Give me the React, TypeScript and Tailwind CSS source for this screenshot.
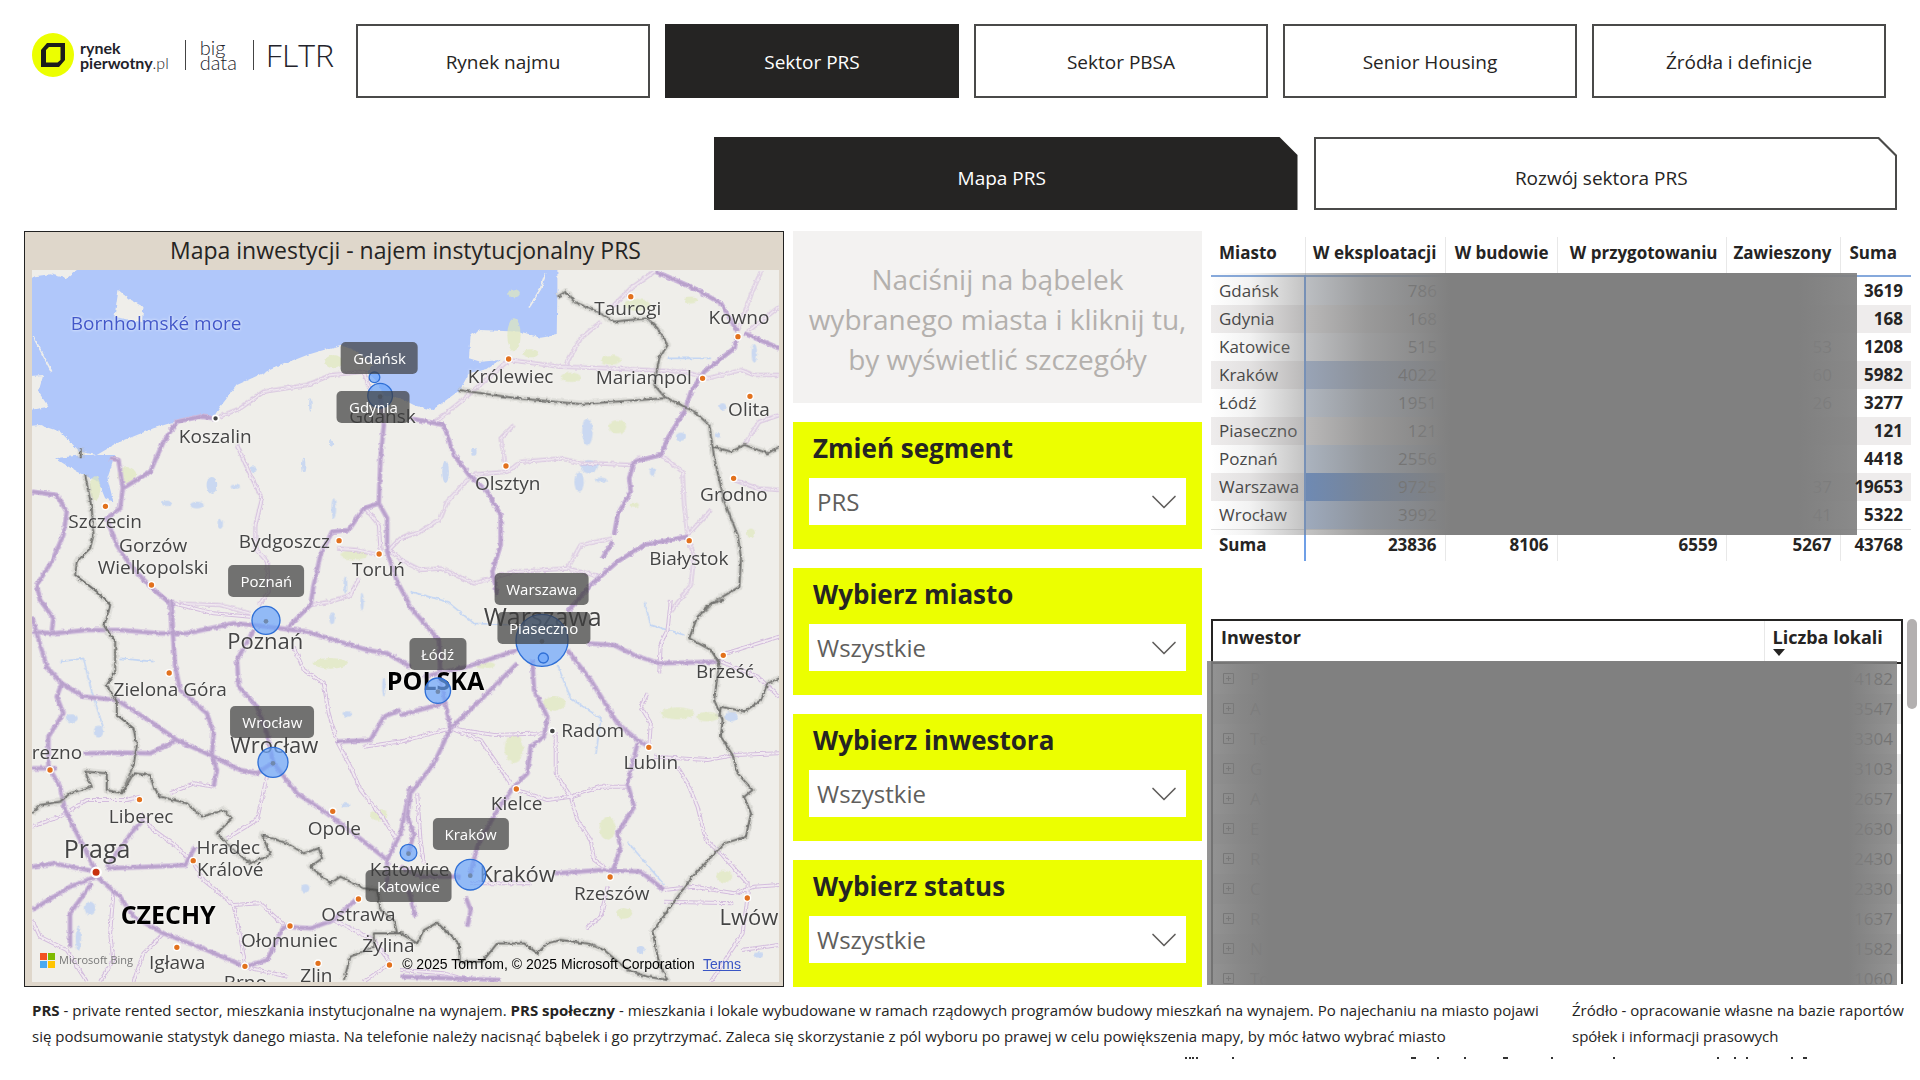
import React from 'react';
import { ChevronDown } from 'lucide-react';

const NAV = ['Rynek najmu', 'Sektor PRS', 'Sektor PBSA', 'Senior Housing', 'Źródła i definicje'];

const FILTERS = [
  { id: 'segment', label: 'Zmień segment', value: 'PRS' },
  { id: 'miasto', label: 'Wybierz miasto', value: 'Wszystkie' },
  { id: 'inwestor', label: 'Wybierz inwestora', value: 'Wszystkie' },
  { id: 'status', label: 'Wybierz status', value: 'Wszystkie' },
];

const CITIES = [
  { name: 'Gdańsk', active: '786', paused: '', sum: '3619', bar: 8 },
  { name: 'Gdynia', active: '168', paused: '', sum: '168', bar: 0 },
  { name: 'Katowice', active: '515', paused: '53', sum: '1208', bar: 4 },
  { name: 'Kraków', active: '4022', paused: '60', sum: '5982', bar: 40 },
  { name: 'Łódź', active: '1951', paused: '26', sum: '3277', bar: 20 },
  { name: 'Piaseczno', active: '121', paused: '', sum: '121', bar: 0 },
  { name: 'Poznań', active: '2556', paused: '', sum: '4418', bar: 26 },
  { name: 'Warszawa', active: '9725', paused: '37', sum: '19653', bar: 90 },
  { name: 'Wrocław', active: '3992', paused: '41', sum: '5322', bar: 40 },
];

const INVESTORS = [
  ['P', '4182'], ['A', '3547'], ['Te', '3304'], ['G', '3103'], ['A', '2657'], ['E', '2630'],
  ['R', '2430'], ['C', '2330'], ['R', '1637'], ['N', '1582'], ['To', '1060'],
];

// Map is laid out on a 746 x 712 plane, positions are turned into percentages
const MAP_W = 746;
const MAP_H = 712;

const TOWNS: { name: string; x: number; y: number; kind?: string }[] = [
  { name: 'Bornholmské more', x: 124, y: 53, kind: 'sea' },
  { name: 'Koszalin', x: 183, y: 166 },
  { name: 'Gdańsk', x: 350, y: 146 },
  { name: 'Szczecin', x: 73, y: 251 },
  { name: 'Gorzów', x: 121, y: 275 },
  { name: 'Wielkopolski', x: 121, y: 297 },
  { name: 'Bydgoszcz', x: 252, y: 271 },
  { name: 'Toruń', x: 346, y: 299 },
  { name: 'Taurogi', x: 595, y: 38 },
  { name: 'Kowno', x: 706, y: 47 },
  { name: 'Królewiec', x: 478, y: 106 },
  { name: 'Mariampol', x: 611, y: 107 },
  { name: 'Olita', x: 716, y: 139 },
  { name: 'Olsztyn', x: 475, y: 213 },
  { name: 'Grodno', x: 701, y: 224 },
  { name: 'Białystok', x: 656, y: 288 },
  { name: 'Poznań', x: 233, y: 370, kind: 'big' },
  { name: 'Zielona Góra', x: 138, y: 419 },
  { name: 'Wrocław', x: 242, y: 474, kind: 'large' },
  { name: 'Drezno', x: 18, y: 482 },
  { name: 'Liberec', x: 109, y: 546 },
  { name: 'Praga', x: 65, y: 578, kind: 'capital' },
  { name: 'Hradec', x: 196, y: 577 },
  { name: 'Králové', x: 198, y: 599 },
  { name: 'Opole', x: 302, y: 558 },
  { name: 'CZECHY', x: 136, y: 644, kind: 'country' },
  { name: 'Ostrawa', x: 326, y: 644 },
  { name: 'Ołomuniec', x: 257, y: 670 },
  { name: 'Igława', x: 145, y: 692 },
  { name: 'Brno', x: 213, y: 712 },
  { name: 'Zlin', x: 284, y: 705 },
  { name: 'Żylina', x: 356, y: 675 },
  { name: 'Warszawa', x: 510, y: 346, kind: 'capital' },
  { name: 'POLSKA', x: 403, y: 410, kind: 'country' },
  { name: 'Brześć', x: 692, y: 401 },
  { name: 'Radom', x: 560, y: 460 },
  { name: 'Lublin', x: 618, y: 492 },
  { name: 'Kielce', x: 484, y: 533 },
  { name: 'Kraków', x: 485, y: 603, kind: 'large' },
  { name: 'Katowice', x: 377, y: 599 },
  { name: 'Rzeszów', x: 579, y: 623 },
  { name: 'Lwów', x: 716, y: 646, kind: 'big' },
];

const TOWN_CLASS: Record<string, string> = {
  town: 'text-[19px] text-[#444]',
  sea: 'text-[19px] text-[#4257c9]',
  big: 'text-[22px] text-[#444]',
  large: 'text-[22px] text-[#444]',
  capital: 'text-[25px] text-[#444]',
  country: 'text-[25px] font-bold text-black',
};

const BADGES = [
  { name: 'Gdańsk', x: 347, y: 88 },
  { name: 'Gdynia', x: 341, y: 137 },
  { name: 'Poznań', x: 234, y: 311 },
  { name: 'Warszawa', x: 509, y: 319 },
  { name: 'Piaseczno', x: 511, y: 358 },
  { name: 'Łódź', x: 405, y: 384 },
  { name: 'Wrocław', x: 240, y: 452 },
  { name: 'Kraków', x: 438, y: 564 },
  { name: 'Katowice', x: 376, y: 616 },
];

const BUBBLES = [
  [1062, 457, 16], [1079, 512, 37], [737, 1186, 42], [758, 1612, 45], [1164, 1883, 25],
  [1349, 1949, 46], [1252, 1397, 38], [1564, 1246, 78], [1568, 1299, 15],
];

const DOTS = [
  [256, 844], [394, 1080], [956, 947], [1076, 987], [1830, 215], [2151, 335], [1464, 402], [2045, 460],
  [2187, 514], [1456, 723], [2138, 760], [2005, 947], [447, 1344], [90, 1635], [358, 1724], [937, 1759],
  [519, 1907], [809, 2103], [1014, 2022], [470, 2167], [674, 2224], [893, 2215], [1107, 2220],
  [2107, 1291], [1884, 1567], [1487, 1692], [1768, 1956], [2179, 2019],
];

const TILES = ['translate(0 0)', 'translate(1140 0)', 'translate(0 1125)', 'translate(1140 1125)'];

const HIGHWAYS = [
  'M270 700L295 705L308 790L390 740L430 650L470 590L540 575L585 580M308 790L300 850L260 880L290 960L330 1020L390 1085L450 1135L455 1230M36 800L110 810L140 860L130 930L95 1010L50 1080L60 1125L100 1180L95 1220M1079 512L1090 600L1080 700L1075 835L1100 880L1100 980L1130 1070L1165 1135M1075 835L1030 850L985 915L935 920L900 990L880 1080L870 1140L800 1210',
  'M30 580L130 600L160 690L205 750L260 800L300 870L300 960L275 1040L290 1110M765 140L880 190L960 235L1010 320M1030 325L1135 370M1010 330L1000 370L910 440L870 500L850 560L800 640L780 690L700 710L685 760L690 800L650 870L640 930M605 1000L635 950M860 935L730 960L650 1010L570 1080L500 1160',
  'M36 95L100 100L200 90L300 90L420 100L500 100L640 70L700 75L860 95L1040 150L1100 160L1170 200M36 50L50 100L80 200L125 250L190 290L290 300L400 370L470 420L570 465L660 510L710 520L758 487M700 90L650 180L655 260L710 320L740 400L758 487L830 580L920 640L1050 740L1100 780L1100 870M455 0L458 100L465 200L480 270L560 340L580 400L575 465L590 510L580 560M125 250L110 290L130 340L85 410L85 500L120 560L135 630L228 815M36 505L110 505M190 460L300 458L390 460L470 420M36 800L100 790L230 815M228 830L150 860L36 930M215 850L150 940L150 1040M230 830L300 890L340 950L430 1000L560 1050L674 1100L740 1080L790 980L870 985L940 960L1010 895M260 805L400 800L495 795L525 740M260 800L340 690L370 660M950 425L1050 420L1090 350L1140 330M1100 780L1140 700L1170 560',
  'M20 10L80 80L115 120L120 240L150 385L100 490L30 580L20 650L40 700L24 758M0 345L130 310M70 230L200 200L350 150M150 385L250 290L350 190M395 180L400 270L440 350L430 410L390 440L380 520L340 560L290 630L230 740L209 824M500 150L570 240L650 370L710 420L745 440M710 430L680 550L700 620L650 700L660 740L640 800L628 830M460 820L600 810L720 815L790 870M560 130L640 135L700 165L775 190L960 185M195 890L210 930L200 980M24 870L45 950M0 1130L300 1140M0 800L60 830L180 830',
];

const ROADS = [
  'M585 580L660 550L730 500L860 480L930 450L1030 440L1050 500M650 660L690 750L725 820L705 900L705 970L740 1010L745 1100L715 1140M950 970L1010 975L1075 990M1100 980L1140 940L1170 925M455 1135L600 1140L690 1165M870 1140L930 1130L990 1110L1015 1060M1035 850L1075 900L1080 980M1100 970L1150 1010',
  'M100 595L180 530L260 460L325 405L480 425L640 430L850 440L920 460L1020 435L1060 450L1135 450M495 420L540 340L600 290M630 250L690 190L760 140M1010 320L1050 210L1080 140M1040 320L1135 245M205 750L320 740L360 710L480 700L540 715L600 715L690 720L720 695M315 720L300 640L340 600M780 690L845 740L850 840L860 930L930 855M205 760L140 830L120 880L60 920L0 940M635 940L540 960L500 1030L340 1040L220 1075L120 1030L60 1035L0 1005M864 950L880 990L870 1080L810 1160M500 1030L600 1055M1030 660L1075 590L1135 570M1000 765L1070 790L1135 795',
  'M820 140L850 210L910 250L925 340L950 425L990 500L1020 570L1085 650L1130 720M740 530L710 660L620 715M450 580L520 550L580 560M36 680L120 650L200 600L320 600L360 590M360 640L400 690L470 740L520 790L550 840L640 915L720 910L790 975M640 915L660 1010L674 1090M280 880L270 1000L280 1080L240 1145M36 960L60 1010L140 1050L200 1145M430 1000L370 1060L340 1145M674 1100L800 1130M460 10L580 40L690 50M940 960L1060 1020L1110 1090L1030 1145M1030 440L1170 420',
  'M150 385L240 420L330 550M0 425L150 385L280 405L430 400M465 400L465 520L510 590L530 660L570 720L580 780L620 810M350 570L440 600L510 590L600 560L680 560M740 280L720 320L750 370L745 440M760 470L920 480L1000 465L1135 460M830 500L860 550L890 620L915 720L960 760L1040 850L1040 890L1025 1000L930 1145M790 870L880 860L1000 880L1060 860L1135 855M790 905L1000 910M620 860L600 950L555 985M810 0L800 90L780 130L775 220M960 165L1135 110M960 185L1070 230L1135 290M1020 1050L1135 1035M209 850L390 850M50 580L60 720L70 790M0 1110L130 1120L200 1140',
];

const BORDERS = [
  'M182 670L182 700M195 750L215 850L220 930L210 970L170 1010L165 1050L230 1100L270 1140L260 1180L250 1200L285 1250L285 1340L260 1380L290 1430L290 1470L340 1510L350 1560L340 1620L305 1705',
  'M900 1170L940 1130L1015 1085L1020 1000L1010 930L970 830L940 700L925 600L880 560L840 540L790 515L760 480L775 400L800 360L770 310L740 280L640 290L590 260L520 230L495 200L470 215M175 495L350 520L540 537L790 520M935 665L990 680L1030 660L1100 685L1135 665',
  'M36 640L60 615L120 605L150 580L215 560L195 515L260 520L260 570L305 580L340 520L390 525L400 560L420 590L500 610L545 650L610 630L635 655L590 700L640 750L690 790L750 765L725 705L800 730L850 760L895 745L905 775L870 800L930 850L960 830L1030 865L1070 870L1080 930L1120 960L1130 1000M970 1140L990 1070L1060 1040L1060 1000L1150 1000',
  'M0 1000L50 1030L70 990L110 968L175 1030L178 1085L245 1085L290 1030L370 1030L410 1060L440 1030L480 1020L560 1030L610 1050L680 1110L740 1130L800 1140L775 1090L755 995L870 835L970 730L1035 710L1050 640L1030 590L1055 570L1010 520L995 465L960 410L965 360L940 300L955 190L930 150L865 115L890 50L930 10L970 0M1135 235L1100 250L1080 300L1030 335L960 320L955 350',
];

const LAKES = [
  [575, 780, 16, 24], [530, 840, 20, 10], [700, 733, 9, 9], [645, 785, 14, 6], [600, 895, 8, 16], [440, 835, 14, 8],
  [870, 540, 4, 20], [850, 720, 5, 22], [932, 655, 6, 10], [940, 850, 7, 30], [975, 1080, 6, 26], [1025, 1130, 5, 26],
  [1700, 620, 16, 40], [1705, 725, 26, 20], [1675, 770, 14, 30], [1740, 765, 18, 7], [1275, 740, 10, 34], [1360, 680, 8, 12],
  [1980, 635, 15, 12], [1895, 740, 8, 12], [2200, 385, 8, 28], [2105, 545, 10, 10], [2090, 630, 8, 8], [935, 1180, 8, 18],
  [155, 1480, 18, 12], [980, 1467, 14, 8], [235, 1520, 14, 18], [210, 2050, 16, 20], [175, 2140, 8, 36], [855, 1990, 12, 12],
  [2130, 1475, 20, 14], [1860, 2175, 12, 12], [975, 1740, 12, 6], [1090, 1385, 5, 30], [2215, 2190, 14, 8],
];

const FORESTS = [
  [940, 410, 26, 20], [320, 750, 28, 24], [225, 790, 16, 36], [1480, 330, 20, 50], [1770, 405, 30, 14], [1650, 457, 30, 14],
  [1530, 385, 24, 12], [1850, 240, 40, 18], [2010, 225, 20, 10], [1790, 605, 26, 20], [1000, 990, 40, 14], [930, 1315, 50, 16],
  [1480, 1570, 28, 44], [1600, 1435, 34, 22], [1970, 1465, 50, 18], [2060, 1475, 34, 14], [1760, 1810, 24, 34], [1075, 1770, 26, 16],
  [2110, 1955, 24, 18], [1390, 1320, 34, 10], [1810, 2065, 24, 16], [1840, 840, 14, 8], [1480, 205, 18, 12], [2190, 925, 12, 14],
];

const Logo: React.FC = () => (
  <div className="flex w-[340px] shrink-0 items-center pl-8 text-[#23232b]">
    <svg width="42" height="44" viewBox="0 0 42 44" aria-hidden="true">
      <ellipse cx="21" cy="22" rx="21" ry="22" fill="#ecff00" />
      <path fillRule="evenodd" fill="#1c1c1c" d="M15 10H33V27L27 34H9V17Z M17 14L14 17V29.5H25.500L28.500 27V14Z" />
    </svg>
    <div className="ml-1.5 font-[Lato] text-[16px] leading-[15px] font-bold">
      <div>rynek</div>
      <div>pierwotny<span className="font-light">.pl</span></div>
    </div>
    <div className="ml-4 h-[30px] w-px bg-[#444]" />
    <div className="ml-3.5 font-[Lato] text-[20px] leading-[15px] font-light">
      <div>big</div>
      <div>data</div>
    </div>
    <div className="ml-4 h-[30px] w-px bg-[#444]" />
    <div className="ml-3 font-['Open_Sans'] text-[32px] leading-[32px] font-light">FLTR</div>
  </div>
);

const MapPanel: React.FC = () => (
  <section className="flex flex-col border border-[#222] bg-[#dfd7cb] pr-1 pb-1 pl-[7px]">
    <h2 className="pb-0.5 text-center text-[23px] leading-9 text-[#252423]">Mapa inwestycji - najem instytucjonalny PRS</h2>
    <div className="relative flex-1 overflow-hidden bg-[#efeeea]">
      <svg className="absolute inset-0 h-full w-full" viewBox="36 135 2238 2136" preserveAspectRatio="none" aria-hidden="true">
        <defs>
          <filter id="rough" x="0" y="0" width="100%" height="100%">
            <feTurbulence type="fractalNoise" baseFrequency="0.08" numOctaves="2" seed="4" />
            <feDisplacementMap in="SourceGraphic" scale="10" xChannelSelector="R" yChannelSelector="G" />
          </filter>
        </defs>
        <rect x="36" y="135" width="2238" height="2136" fill="#efeeea" />
        <g filter="url(#rough)">
          <path fill="#b0c7fa" d="M0 160L90 148L140 160L190 120H1610V200L1608 330L1560 338L1500 320L1380 315L1350 330L1345 400L1380 410L1440 405L1400 432L1345 445L1318 495L1270 530L1235 555L1180 540L1140 520L1090 512L1070 470L1040 440L1060 420L1000 375L960 360L860 390L760 430L650 480L600 545L580 575L480 585L400 610L290 655L230 690L180 680L120 620L60 600L0 605Z" />
          <path fill="#b0c7fa" d="M105 700L190 690L285 690L262 760L280 830L255 820L235 770L170 740Z" />
          <path fill="#efeeea" d="M295 195L330 225L370 245L365 292L283 275ZM0 455L70 450L55 500L85 545L0 560ZM0 600L50 605L110 640L130 690L90 700L0 690Z" />
          <path fill="none" stroke="#efeeea" strokeWidth="5" d="M1525 248L1560 190L1575 145M40 335L95 440" />
          {FORESTS.map(([x, y, rx, ry]) => (
            <ellipse key={`${x}-${y}`} cx={x} cy={y} rx={rx} ry={ry} fill="#dfe8bd" opacity="0.7" />
          ))}
          {LAKES.map(([x, y, rx, ry]) => (
            <ellipse key={`${x}-${y}`} cx={x} cy={y} rx={rx} ry={ry} fill="#b5cdf4" opacity="0.65" />
          ))}
          <g fill="none" stroke="#b9d0f5" strokeWidth="5" opacity="0.8">
            <path d="M1170 1100L1280 1130L1360 1195L1480 1200M1610 1320L1650 1420L1740 1480L1725 1590M300 1300L400 1310M120 1310L190 1300L215 1400L250 1510M1940 400L2070 400M1870 1130L1890 1200L1990 1230M1820 1850L1930 1980" />
          </g>
        </g>
        <g fill="none" strokeLinejoin="round" filter="url(#rough)">
          {ROADS.map((d, i) => (
            <g key={d} transform={TILES[i]}>
              <path d={d} stroke="#d3bddd" strokeWidth="12" />
              <path d={d} stroke="#f1eaf0" strokeWidth="6" />
            </g>
          ))}
          {HIGHWAYS.map((d, i) => (
            <g key={d} transform={TILES[i]}>
              <path d={d} stroke="#cdb9db" strokeWidth="15" />
              <path d={d} stroke="#b9a1cc" strokeWidth="8" />
            </g>
          ))}
          {BORDERS.map((d, i) => (
            <g key={d} transform={TILES[i]}>
              <path d={d} stroke="#bdbdb8" strokeWidth="20" opacity="0.35" />
              <path d={d} stroke="#72726f" strokeWidth="6" />
            </g>
          ))}
        </g>
        {DOTS.map(([x, y]) => (
          <circle key={`${x}-${y}`} cx={x} cy={y} r="10" fill="#e2711d" stroke="#fff" strokeWidth="4" />
        ))}
        <circle cx="228" cy="1942" r="14" fill="#c8320f" stroke="#fff" strokeWidth="7" />
        <circle cx="586" cy="580" r="9" fill="#444" stroke="#fff" strokeWidth="5" />
        <circle cx="1595" cy="1518" r="9" fill="#444" stroke="#fff" strokeWidth="4" />
      </svg>

      {TOWNS.map((t) => (
        <span
          key={t.name}
          className={`absolute -translate-x-1/2 -translate-y-1/2 whitespace-nowrap leading-none [text-shadow:0_0_3px_#fff] ${TOWN_CLASS[t.kind || 'town']}`}
          style={{ left: `${(t.x / MAP_W) * 100}%`, top: `${(t.y / MAP_H) * 100}%` }}
        >
          {t.name}
        </span>
      ))}

      <svg className="absolute inset-0 h-full w-full" viewBox="36 135 2238 2136" preserveAspectRatio="none" aria-hidden="true">
        {BUBBLES.map(([x, y, r]) => (
          <g key={`${x}-${y}`}>
            <circle cx={x} cy={y} r={r} fill="#6ea6fb" fillOpacity="0.72" stroke="#2f6fd6" strokeWidth="4" />
            {r > 20 && <circle cx={x} cy={y + 3} r="7" fill="#7089ad" />}
          </g>
        ))}
      </svg>

      {BADGES.map((b) => (
        <span
          key={b.name}
          className="absolute -translate-x-1/2 -translate-y-1/2 rounded-[5px] bg-[#3c3c3c]/70 px-3 text-[15px] leading-8 font-medium text-white"
          style={{ left: `${(b.x / MAP_W) * 100}%`, top: `${(b.y / MAP_H) * 100}%` }}
        >
          {b.name}
        </span>
      ))}

      <div className="absolute bottom-3.5 left-2 flex items-center gap-1 text-[11px] leading-4 text-[#777]">
        <svg width="15" height="15" viewBox="0 0 15 15" aria-hidden="true">
          <path fill="#f25022" d="M0 0h7v7H0z" />
          <path fill="#7fba00" d="M8 0h7v7H8z" />
          <path fill="#4aa8f0" d="M0 8h7v7H0z" />
          <path fill="#ffc400" d="M8 8h7v7H8z" />
        </svg>
        Microsoft Bing
      </div>
      <div className="absolute right-[38px] bottom-2.5 flex gap-2 font-['Liberation_Sans'] text-[14px] leading-4 text-black">
        <span>© 2025 TomTom, © 2025 Microsoft Corporation</span>
        <a href="#" className="text-[#3a55c4] underline">Terms</a>
      </div>
    </div>
  </section>
);

const Filters: React.FC = () => (
  <div className="flex flex-col gap-[19px]">
    <button className="h-[172px] bg-[#f3f2f1] pt-1 text-[28px] leading-10 text-[#b3b0ad]">
      Naciśnij na bąbelek<br />wybranego miasta i kliknij tu,<br />by wyświetlić szczegóły
    </button>
    {FILTERS.map((f) => (
      <div key={f.id} className="bg-[#ecff00] px-4 pb-6">
        <label htmlFor={f.id} className="block pb-1 pl-1 text-[26px] leading-[52px] font-bold text-[#252423]">{f.label}</label>
        <div className="relative">
          <select id={f.id} className="block h-[47px] w-full appearance-none bg-white px-2 text-[24px] text-[#605e5c]">
            <option>{f.value}</option>
          </select>
          <ChevronDown className="pointer-events-none absolute top-0 right-0 h-12 w-11 text-[#605e5c]" strokeWidth={0.9} />
        </div>
      </div>
    ))}
  </div>
);

const CityTable: React.FC = () => (
  <div className="relative mt-1.5">
    <table className="w-full table-fixed border-collapse text-right text-[17px] text-[#252423]">
      <colgroup>
        <col className="w-[94px]" />
        <col className="w-[140px]" />
        <col className="w-[112px]" />
        <col className="w-[169px]" />
        <col className="w-[114px]" />
        <col />
      </colgroup>
      <thead>
        <tr className="h-[39px] border-b-2 border-[#86a9dc] whitespace-nowrap">
          <th className="border-r border-[#e8e8e8] pb-1.5 pl-2 text-left">Miasto</th>
          <th className="border-r border-[#e8e8e8] pr-2 pb-1.5">W eksploatacji</th>
          <th className="border-r border-[#e8e8e8] pr-2 pb-1.5">W budowie</th>
          <th className="border-r border-[#e8e8e8] pr-2 pb-1.5">W przygotowaniu</th>
          <th className="border-r border-[#e8e8e8] pr-2 pb-1.5">Zawieszony</th>
          <th className="pr-3.5 pb-1.5">Suma</th>
        </tr>
      </thead>
      <tbody className="leading-7">
        {CITIES.map((c) => (
          <tr key={c.name} className="h-7 even:bg-[#eeecec]">
            <td className="border-r-2 border-[#6f9fe6] pl-2 text-left text-[#444]">{c.name}</td>
            <td className="relative pr-2 text-[#333]">
              <span className="absolute inset-0 bg-[#4f8ae0]" style={{ opacity: c.bar / 100 }} />
              <span className="relative">{c.active}</span>
            </td>
            <td />
            <td />
            <td className="pr-2">{c.paused}</td>
            <td className="relative z-10 pr-2 font-bold">{c.sum}</td>
          </tr>
        ))}
        <tr className="h-[31px] border-t border-[#e0e0e0] font-bold">
          <td className="border-r-2 border-[#6f9fe6] pl-2 text-left">Suma</td>
          <td className="border-r border-[#e8e8e8] pr-2">23836</td>
          <td className="border-r border-[#e8e8e8] pr-2">8106</td>
          <td className="border-r border-[#e8e8e8] pr-2">6559</td>
          <td className="border-r border-[#e8e8e8] pr-2">5267</td>
          <td className="pr-2">43768</td>
        </tr>
      </tbody>
    </table>
    <div className="absolute top-9 right-[54px] bottom-[26px] left-0 bg-[linear-gradient(to_right,transparent_0%,rgba(128,128,128,.1)_6%,rgba(128,128,128,.45)_14%,rgba(128,128,128,.76)_24%,rgba(128,128,128,.9)_32%,#808080_37%,#808080_91%,rgba(128,128,128,.92)_100%)]" />
  </div>
);

const InvestorTable: React.FC = () => (
  <div className="mt-[58px] -mr-1.5 flex items-start gap-1">
    <div className="relative flex-1">
      <div className="h-[365px] overflow-hidden border-x-2 border-t-2 border-[#252423]">
        <table className="w-full table-fixed border-collapse text-[17px] text-[#252423]">
          <colgroup>
            <col />
            <col className="w-[137px]" />
          </colgroup>
          <thead>
            <tr className="h-[42px] border-b-2 border-[#252423] text-left align-top text-[18px] leading-8">
              <th className="border-r border-[#e8e8e8] pl-2">Inwestor</th>
              <th className="pl-2 leading-none whitespace-nowrap">
                <span className="block leading-8">Liczba lokali</span>
                <svg className="-mt-1" width="12" height="7" viewBox="0 0 12 7" aria-hidden="true"><path d="M0 0H12L6 7Z" fill="#252423" /></svg>
              </th>
            </tr>
          </thead>
          <tbody>
            {INVESTORS.map(([name, count]) => (
              <tr key={count} className="h-[30px] leading-[30px] even:bg-[#eee]">
                <td className="pl-2.5">
                  <span className="flex items-center gap-4">
                    <svg width="11" height="11" viewBox="0 0 11 11" aria-hidden="true">
                      <path d="M.5.5h10v10H.5zM3 5.500h5M5.500 3v5" fill="none" stroke="#333" />
                    </svg>
                    {name}
                  </span>
                </td>
                <td className="pr-2 text-right">{count}</td>
              </tr>
            ))}
          </tbody>
        </table>
      </div>
      <div className="absolute top-[42px] right-1.5 -bottom-[1px] -left-1 bg-[linear-gradient(to_right,rgba(128,128,128,.84)_0%,rgba(128,128,128,.94)_5%,#808080_9%,#808080_93%,rgba(128,128,128,.84)_100%)]" />
    </div>
    <div className="h-[90px] w-2.5 rounded-full bg-[#b3b0b0]" />
  </div>
);

const App: React.FC = () => {
  return (
    <div className="min-h-screen overflow-hidden bg-white font-['Open_Sans',sans-serif] text-[#252423]">
      <header className="flex h-[98px] items-end pr-[34px]">
        <div className="flex h-[86px] w-[356px] shrink-0 items-center">
          <Logo />
        </div>
        <nav className="grid h-[74px] flex-1 grid-cols-5 gap-[15px]">
          {NAV.map((item) => (
            <button
              key={item}
              className={
                item === 'Sektor PRS'
                  ? 'border-2 border-[#252423] bg-[#252423] pt-0.5 text-[19px] text-white'
                  : 'border-2 border-[#4a4a49] bg-white pt-0.5 text-[19px]'
              }
            >
              {item}
            </button>
          ))}
        </nav>
      </header>

      <div className="mt-[39px] flex pr-[23px]">
        <div className="w-[714px] shrink-0" />
        <div className="grid h-[73px] flex-1 grid-cols-2 gap-4">
          <button className="bg-[#252423] pt-2.5 pr-2 text-[19px] text-white [clip-path:polygon(0_0,calc(100%-18px)_0,100%_18px,100%_100%,0_100%)]">
            Mapa PRS
          </button>
          <div className="bg-[#4a4a49] p-0.5 [clip-path:polygon(0_0,calc(100%-18px)_0,100%_18px,100%_100%,0_100%)]">
            <button className="h-full w-full bg-white pt-2.5 pr-2 text-[19px] [clip-path:polygon(0_0,calc(100%-17px)_0,100%_17px,100%_100%,0_100%)]">
              Rozwój sektora PRS
            </button>
          </div>
        </div>
      </div>

      <main className="mt-[21px] grid grid-cols-[760fr_409fr_700fr] gap-[9px] pr-[9px] pl-6">
        <MapPanel />
        <Filters />
        <div className="min-w-0">
          <CityTable />
          <InvestorTable />
        </div>
      </main>

      <footer className="mt-2.5 flex justify-between pr-2 pl-8 text-[15px] leading-[26px]">
        <p className="w-[1520px]">
          <b>PRS</b> - private rented sector, mieszkania instytucjonalne na wynajem. <b>PRS społeczny</b> - mieszkania i lokale wybudowane w ramach rządowych programów budowy mieszkań na wynajem. Po najechaniu na miasto pojawi<br />
          się podsumowanie statystyk danego miasta. Na telefonie należy nacisnąć bąbelek i go przytrzymać. Zaleca się skorzystanie z pól wyboru po prawej w celu powiększenia mapy, by móc łatwo wybrać miasto
        </p>
        <p className="w-[340px] whitespace-nowrap">
          Źródło - opracowanie własne na bazie raportów<br />
          spółek i informacji prasowych
        </p>
      </footer>
      <svg className="mt-2 ml-auto block" width="735" height="3" viewBox="0 0 735 3" aria-hidden="true">
        <path stroke="#333" strokeWidth="2" fill="none" d="M0 1h2M4 1h2M7 1h2M11 1h2M47 1h2M226 1h5M252 1h2M279 1h2M318 1h5M366 1h2M428 1h2M532 1h2M549 1h2M561 1h2M606 1h2M618 1h4" />
      </svg>
    </div>
  );
};

export default App;
